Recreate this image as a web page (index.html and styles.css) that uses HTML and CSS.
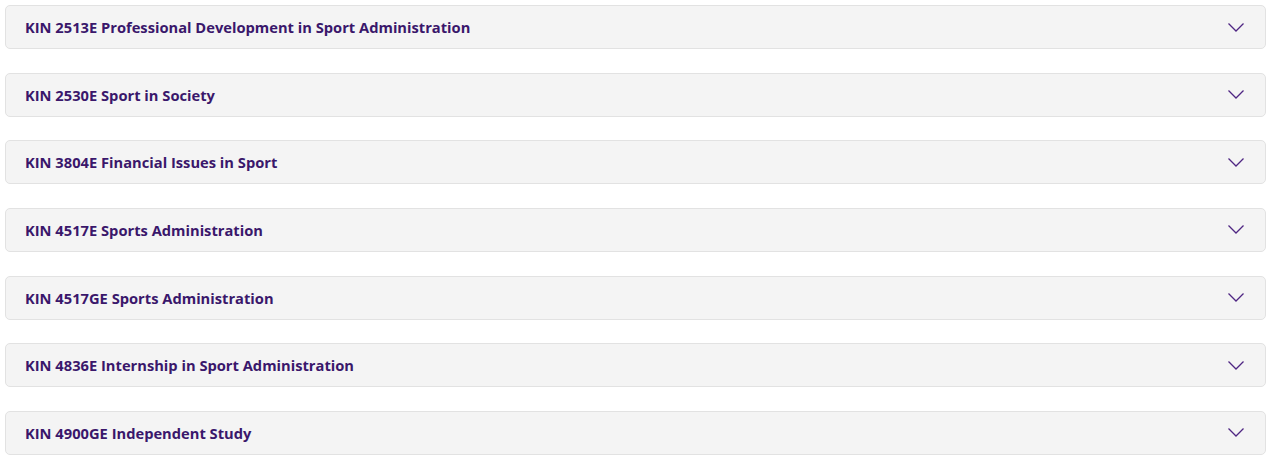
FILE: index.html
```html
<!DOCTYPE html>
<html>
<head>
<meta charset="utf-8">
<link rel="stylesheet" href="styles.css">
</head>
<body>
<div class="list">
  <div class="item"><span class="title">KIN 2513E Professional Development in Sport Administration</span><svg class="chev" viewBox="0 0 16 9"><path d="M0.5 0.5 L8 8 L15.5 0.5" /></svg></div>
  <div class="item"><span class="title">KIN 2530E Sport in Society</span><svg class="chev" viewBox="0 0 16 9"><path d="M0.5 0.5 L8 8 L15.5 0.5" /></svg></div>
  <div class="item"><span class="title">KIN 3804E Financial Issues in Sport</span><svg class="chev" viewBox="0 0 16 9"><path d="M0.5 0.5 L8 8 L15.5 0.5" /></svg></div>
  <div class="item"><span class="title">KIN 4517E Sports Administration</span><svg class="chev" viewBox="0 0 16 9"><path d="M0.5 0.5 L8 8 L15.5 0.5" /></svg></div>
  <div class="item"><span class="title">KIN 4517GE Sports Administration</span><svg class="chev" viewBox="0 0 16 9"><path d="M0.5 0.5 L8 8 L15.5 0.5" /></svg></div>
  <div class="item"><span class="title">KIN 4836E Internship in Sport Administration</span><svg class="chev" viewBox="0 0 16 9"><path d="M0.5 0.5 L8 8 L15.5 0.5" /></svg></div>
  <div class="item"><span class="title">KIN 4900GE Independent Study</span><svg class="chev" viewBox="0 0 16 9"><path d="M0.5 0.5 L8 8 L15.5 0.5" /></svg></div>
</div>
</body>
</html>
```

FILE: styles.css
```css
html, body {
  margin: 0;
  padding: 0;
  background: #ffffff;
}
.list {
  padding: 5px 13px 0 5px;
  display: flex;
  flex-direction: column;
  gap: 23.67px;
}
.item {
  height: 44px;
  box-sizing: border-box;
  background: #f4f4f4;
  border: 1px solid #e2e2e2;
  border-radius: 5px;
  display: flex;
  align-items: center;
  justify-content: space-between;
  padding: 0 21px 0 19px;
}
.title {
  font-family: "Open Sans", sans-serif;
  font-weight: 700;
  font-size: 14.7px;
  color: #3a176b;
}
.chev {
  width: 16px;
  height: 9px;
  fill: none;
  stroke: #4f2683;
  stroke-width: 1.3;
}
```
